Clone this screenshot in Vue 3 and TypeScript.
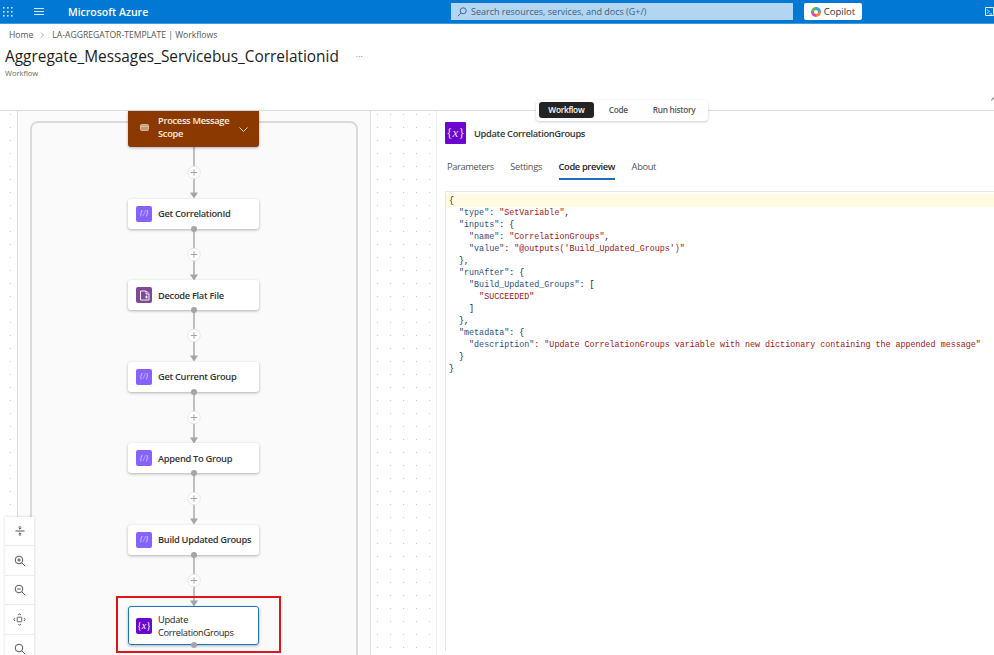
<script setup lang="ts">
type Kind = 'scope' | 'compose' | 'flat' | 'variable'
interface Step { title: string; kind: Kind }
type Tok = { t: string; c: 'k' | 's' | 'p' }

const steps: Step[] = [
  { title: 'Process Message Scope', kind: 'scope' },
  { title: 'Get CorrelationId', kind: 'compose' },
  { title: 'Decode Flat File', kind: 'flat' },
  { title: 'Get Current Group', kind: 'compose' },
  { title: 'Append To Group', kind: 'compose' },
  { title: 'Build Updated Groups', kind: 'compose' },
  { title: 'Update CorrelationGroups', kind: 'variable' },
]

const k = (t: string): Tok => ({ t, c: 'k' })
const s = (t: string): Tok => ({ t, c: 's' })
const p = (t: string): Tok => ({ t, c: 'p' })

const code: Tok[][] = [
  [p('{')],
  [p('  '), k('"type"'), p(': '), s('"SetVariable"'), p(',')],
  [p('  '), k('"inputs"'), p(': {')],
  [p('    '), k('"name"'), p(': '), s('"CorrelationGroups"'), p(',')],
  [p('    '), k('"value"'), p(': '), s(`"@outputs('Build_Updated_Groups')"`)],
  [p('  },')],
  [p('  '), k('"runAfter"'), p(': {')],
  [p('    '), k('"Build_Updated_Groups"'), p(': [')],
  [p('      '), s('"SUCCEEDED"')],
  [p('    ]')],
  [p('  },')],
  [p('  '), k('"metadata"'), p(': {')],
  [p('    '), k('"description"'), p(': '), s('"Update CorrelationGroups variable with new dictionary containing the appended message"')],
  [p('  }')],
  [p('}')],
]

const panelTabs = ['Parameters', 'Settings', 'Code preview', 'About']
const viewTabs = ['Workflow', 'Code', 'Run history']
</script>

<template>
  <div class="page">
    <header class="topbar">
      <svg class="waffle" width="10" height="10" viewBox="0 0 10 10" fill="#cfe4f7">
        <template v-for="x in [0, 4, 8]" :key="x">
          <rect v-for="y in [0, 4, 8]" :key="y" :x="x" :y="y" width="1.6" height="1.6" />
        </template>
      </svg>
      <svg class="burger" width="10" height="8" viewBox="0 0 10 8" stroke="#d6e8f8" stroke-width="1">
        <path d="M0 .5h10M0 3.5h10M0 6.5h10" />
      </svg>
      <span class="brand">Microsoft Azure</span>
      <div class="search">
        <svg width="10" height="10" viewBox="0 0 10 10" fill="none" stroke="#44698c" stroke-width="1">
          <circle cx="6.2" cy="3.8" r="3" />
          <path d="M4 6 .8 9.2" />
        </svg>
        <span>Search resources, services, and docs (G+/)</span>
      </div>
      <div class="copilot">
        <svg width="10" height="10" viewBox="0 0 10 10">
          <path d="M5 0a5 5 0 0 1 5 5H5z" fill="#36a3dc" />
          <path d="M10 5a5 5 0 0 1-5 5V5z" fill="#f0803c" />
          <path d="M5 10a5 5 0 0 1-5-5h5z" fill="#d94fa0" />
          <path d="M0 5a5 5 0 0 1 5-5v5z" fill="#62b84a" />
          <circle cx="5" cy="5" r="2" fill="#fff" />
        </svg>
        <span>Copilot</span>
      </div>
      <svg class="shell" width="9" height="9" viewBox="0 0 9 9" fill="none" stroke="#e6f1fb" stroke-width="1">
        <path d="M.5.5h8v8h-8zM2 2.5l2 2-2 2M4.5 7H7" />
      </svg>
    </header>

    <section class="heading">
      <nav class="crumbs">
        <span>Home</span>
        <svg width="5" height="6" viewBox="0 0 5 6" fill="none" stroke="#9a9a9a" stroke-width=".8">
          <path d="m1 .5 2.4 2.5L1 5.5" />
        </svg>
        <span>LA-AGGREGATOR-TEMPLATE | Workflows</span>
      </nav>
      <div class="title-row">
        <h1>Aggregate_Messages_Servicebus_Correlationid</h1>
        <span class="more">···</span>
      </div>
      <div class="subtitle">Workflow</div>
    </section>

    <main class="workspace">
      <div class="view-tabs">
        <span v-for="tab in viewTabs" :key="tab" class="view-tab" :class="{ active: tab === 'Workflow' }">{{ tab }}</span>
      </div>
      <svg class="collapse" width="5" height="4" viewBox="0 0 5 4" fill="none" stroke="#444" stroke-width=".9">
        <path d="M.3 3.5 2.5.7l2.2 2.8" />
      </svg>

      <div class="dots dots-left"></div>

      <div class="lane">
        <div class="scope">
          <div class="flow">
            <template v-for="(step, i) in steps" :key="step.title">
              <svg v-if="i > 0" class="connector" width="30" height="51.5" viewBox="0 0 30 51.5">
                <path d="M15 0v46" stroke="#a4a4a9" stroke-width="1.4" />
                <path d="m11 45.5h8l-4 6z" fill="#a4a4a9" />
                <circle cx="15" cy="25.500" r="6.300" fill="#fff" stroke="#e2e2e2" stroke-width=".8" />
                <path d="M15 22.300v6.400M11.800 25.500h6.400" stroke="#9a9a9e" stroke-width=".9" />
              </svg>
              <div
                class="node"
                :class="{ 'node-scope': step.kind === 'scope', 'node-selected': step.kind === 'variable' }"
              >
                <span class="icon" :class="`icon-${step.kind}`">
                  <svg v-if="step.kind === 'scope'" width="9" height="7" viewBox="0 0 9 7" fill="#c49a76" stroke="#e5c9ad" stroke-width=".8">
                    <rect x=".5" y=".5" width="8" height="6" rx="1" />
                    <path d="M.5 2.500h8" fill="none" />
                  </svg>
                  <svg v-else-if="step.kind === 'flat'" width="11" height="11" viewBox="0 0 11 11" fill="none" stroke="#fff" stroke-width=".9">
                    <path d="M1.500 1h5.500v3h3v6h-8.500z" />
                    <path d="M7.500 1 10 3.500M6 7h3M7.500 5.500v3" />
                  </svg>
                  <span v-else-if="step.kind === 'compose'" class="glyph">{/}</span>
                  <span v-else class="glyph glyph-x">{<i>x</i>}</span>
                </span>
                <span class="node-title">{{ step.title }}</span>
                <svg v-if="step.kind === 'scope'" class="chevron" width="9" height="5" viewBox="0 0 9 5" fill="none" stroke="#f0dcc6" stroke-width="1">
                  <path d="m.5.5 4 4 4-4" />
                </svg>
                <span v-if="step.kind !== 'scope'" class="port"></span>
                <span v-if="step.kind === 'variable'" class="callout"></span>
              </div>
            </template>
          </div>
        </div>
      </div>

      <div class="dots dots-right"></div>

      <aside class="panel">
        <div class="panel-head">
          <span class="panel-icon">{<i>x</i>}</span>
          <span class="panel-title">Update CorrelationGroups</span>
        </div>
        <div class="panel-tabs">
          <span v-for="tab in panelTabs" :key="tab" class="panel-tab" :class="{ active: tab === 'Code preview' }">{{ tab }}</span>
        </div>
        <div class="code">
          <div v-for="(line, i) in code" :key="i" class="line" :class="{ current: i === 0 }"><span v-for="(tok, j) in line" :key="j" :class="tok.c">{{ tok.t }}</span></div>
        </div>
      </aside>

      <div class="tools">
        <button class="tool">
          <svg width="12" height="12" viewBox="0 0 12 12" fill="none" stroke="#555" stroke-width="1">
            <path d="M1.500 6h9M6 1v3M6 11V8M4.600 2.800 6 4.200l1.400-1.400M4.600 9.200 6 7.800l1.400 1.400" />
          </svg>
        </button>
        <button class="tool">
          <svg width="12" height="12" viewBox="0 0 12 12" fill="none" stroke="#555" stroke-width="1">
            <circle cx="5" cy="5" r="3.800" />
            <path d="m7.800 7.800 3.400 3.400M3.200 5h3.600M5 3.200v3.600" />
          </svg>
        </button>
        <button class="tool">
          <svg width="12" height="12" viewBox="0 0 12 12" fill="none" stroke="#555" stroke-width="1">
            <circle cx="5" cy="5" r="3.800" />
            <path d="m7.800 7.800 3.400 3.400M3.200 5h3.600" />
          </svg>
        </button>
        <button class="tool">
          <svg width="13" height="13" viewBox="0 0 13 13" fill="none" stroke="#555" stroke-width=".9">
            <rect x="4.200" y="4.200" width="4.600" height="4.600" rx=".6" />
            <path d="M5 2 6.500.8 8 2M5 11l1.500 1.200L8 11M2 5 .8 6.500 2 8M11 5l1.200 1.500L11 8" />
          </svg>
        </button>
        <button class="tool">
          <svg width="12" height="12" viewBox="0 0 12 12" fill="none" stroke="#555" stroke-width="1">
            <circle cx="5" cy="5" r="3.800" />
            <path d="m7.800 7.800 3.400 3.400" />
          </svg>
        </button>
      </div>
    </main>
  </div>
</template>

<style>
html, body { margin: 0; background: #fff; }
</style>

<style scoped>
.page {
  width: 994px;
  height: 655px;
  overflow: hidden;
  display: flex;
  flex-direction: column;
  font-family: "Open Sans", "Noto Sans", sans-serif;
  color: #242424;
  background: #fff;
}

.topbar {
  height: 23px;
  flex: none;
  display: flex;
  align-items: center;
  background: #0078d4;
  border-bottom: 1px solid #3d9be0;
  position: relative;
}
.waffle { margin-left: 3px; }
.burger { margin-left: 21px; }
.brand {
  margin-left: 24px;
  color: #fff;
  font-size: 10.500px;
  font-weight: 600;
  width: 383px;
}
.search {
  width: 342px;
  height: 17px;
  box-sizing: border-box;
  padding-left: 6px;
  display: flex;
  align-items: center;
  gap: 4px;
  background: #b2d5f1;
  font-size: 9px;
  color: #3f5f7c;
}
.copilot {
  margin-left: 11px;
  width: 58px;
  height: 17px;
  border-radius: 2px;
  background: #fff;
  display: flex;
  align-items: center;
  justify-content: center;
  gap: 3px;
  font-size: 9.500px;
  color: #333;
}
.shell { margin-left: 123px; }

.heading {
  height: 86px;
  flex: none;
  box-sizing: border-box;
  padding: 4px 0 0 5px;
}
.crumbs {
  display: flex;
  align-items: center;
  margin-left: 4px;
  height: 14px;
  font-size: 8.600px;
  color: #555;
}
.crumbs svg { margin: 0 7px 0 7px; }
.title-row {
  display: flex;
  align-items: center;
  margin-top: 3px;
  height: 23px;
}
h1 {
  margin: 0;
  font-size: 15.400px;
  font-weight: 500;
  color: #1c1c1c;
  white-space: nowrap;
}
.more {
  margin-left: 17px;
  font-size: 9px;
  color: #888;
}
.subtitle {
  font-size: 7.500px;
  color: #666;
  margin-top: 0;
}

.workspace {
  flex: 1;
  min-height: 0;
  position: relative;
  display: flex;
  border-top: 1px solid #dcdcdc;
}

.view-tabs {
  position: absolute;
  top: -11.500px;
  left: 536px;
  z-index: 3;
  display: flex;
  align-items: center;
  width: 172px;
  height: 21px;
  box-sizing: border-box;
  padding-left: 3px;
  border-radius: 4px;
  background: #fff;
  box-shadow: 0 1px 3px rgba(0, 0, 0, .2);
  font-size: 8.300px;
  font-weight: 600;
  letter-spacing: -.3px;
  color: #555;
}
.view-tab { padding: 0 12.500px; line-height: 16px; white-space: nowrap; }
.view-tab.active {
  width: 57px;
  box-sizing: border-box;
  text-align: center;
  padding: 0;
  margin-right: 2.500px;
  border-radius: 3px;
  background: #242424;
  color: #fff;
}
.collapse { position: absolute; right: -2px; top: -14px; }

.dots {
  flex: none;
  background-image: radial-gradient(circle, #c8c8c8 0.6px, transparent 0.9px);
  background-size: 13px 13px;
}
.dots-left { width: 17px; background-position: 4px -3px; }
.dots-right { width: 65px; background-position: 0 -3px; }

.lane {
  width: 354px;
  flex: none;
  box-sizing: border-box;
  border-left: 1.500px solid #dcdcdc;
  border-right: 1.500px solid #dcdcdc;
  padding: 10px 12.500px 0 11.500px;
  background: #fbfbfb;
}
.scope {
  height: 600px;
  box-sizing: border-box;
  border: 2px solid #dadada;
  border-radius: 8px;
  background: #fafafa;
}
.flow {
  display: flex;
  flex-direction: column;
  align-items: center;
  margin-top: -12px;
}
.connector { display: block; flex: none; }

.node {
  position: relative;
  width: 131px;
  height: 30px;
  flex: none;
  box-sizing: border-box;
  display: flex;
  align-items: center;
  padding-left: 8px;
  gap: 6px;
  border-radius: 3px;
  background: #fff;
  box-shadow: 0 1px 3px rgba(0, 0, 0, .3);
  font-size: 9.300px;
  font-weight: 600;
  letter-spacing: -.3px;
  color: #333;
}
.node-title { line-height: 13px; width: 92px; }
.node:not(.node-scope):not(.node-selected) .node-title { width: auto; white-space: nowrap; }
.node-scope {
  height: 36px;
  padding-bottom: 4px;
  background: #8c3900;
  color: #fbeee2;
  border-radius: 0 0 3px 3px;
}
.node-selected {
  height: 39px;
  outline: 1.500px solid #1f74bf;
  outline-offset: -1.500px;
  font-weight: 500;
  color: #242424;
}
.icon {
  width: 16px;
  height: 16px;
  flex: none;
  border-radius: 2px;
  display: flex;
  align-items: center;
  justify-content: center;
  color: #e6ddff;
}
.icon-scope { background: transparent; }
.icon-compose { background: #8661fc; }
.icon-flat { background: #804998; }
.icon-variable { background: #6a06cf; color: #fff; }
.glyph { font: 8px "Liberation Serif", serif; font-style: italic; letter-spacing: 0; }
.glyph-x { font-size: 10px; font-style: normal; }
.chevron { position: absolute; left: 111px; top: 16px; }
.port {
  position: absolute;
  left: 50%;
  bottom: -3px;
  width: 6px;
  height: 6px;
  margin-left: -3px;
  border-radius: 50%;
  background: #a4a4a9;
}
.callout {
  position: absolute;
  left: -12.500px;
  top: -10.500px;
  width: 165.500px;
  height: 57px;
  box-sizing: border-box;
  border: 2px solid #e0141c;
}

.panel {
  flex: 1;
  min-width: 0;
  box-sizing: border-box;
  padding-left: 8px;
  border-left: 1px solid #eeeeee;
  background: #fff;
}
.panel-head {
  display: flex;
  align-items: center;
  height: 22px;
  margin-top: 11px;
  gap: 8px;
}
.panel-icon {
  width: 21px;
  height: 22px;
  flex: none;
  border-radius: 1px;
  display: flex;
  align-items: center;
  justify-content: center;
  background: #6a06cf;
  color: #e9dcff;
  font: 13px "Liberation Serif", serif;
}
.panel-title { font-size: 9.300px; font-weight: 600; color: #333; letter-spacing: -.32px; }
.panel-tabs {
  display: flex;
  gap: 16.500px;
  margin: 13px 0 0 2px;
  font-size: 9.300px;
  letter-spacing: -.35px;
  color: #555;
}
.panel-tab { height: 23px; line-height: 20px; box-sizing: border-box; }
.panel-tab.active {
  color: #242424;
  font-weight: 600;
  border-bottom: 2px solid #1c6fb8;
}
.code {
  margin-top: 11px;
  padding-top: 2px;
  height: 460px;
  box-sizing: border-box;
  border-left: 1px solid #e4e4e4;
  border-top: 1px solid #e8e8e8;
  font: 8.370px/12px "Liberation Mono", monospace;
}
.line { white-space: pre; padding-left: 3px; height: 12px; color: #222; }
.line.current { background: #fffbe0; height: 13px; line-height: 14px; }
.k { color: #2b4f7e; }
.s { color: #a31515; }
.p { color: #222; }

.tools {
  position: absolute;
  left: 5px;
  top: 406px;
  z-index: 2;
  display: flex;
  flex-direction: column;
  gap: 1px;
  width: 29px;
  background: #ececec;
  box-shadow: 0 0 3px rgba(0, 0, 0, .15);
}
.tool {
  height: 28.400px;
  padding: 0;
  border: 0;
  background: #fff;
  display: flex;
  align-items: center;
  justify-content: center;
}
</style>
